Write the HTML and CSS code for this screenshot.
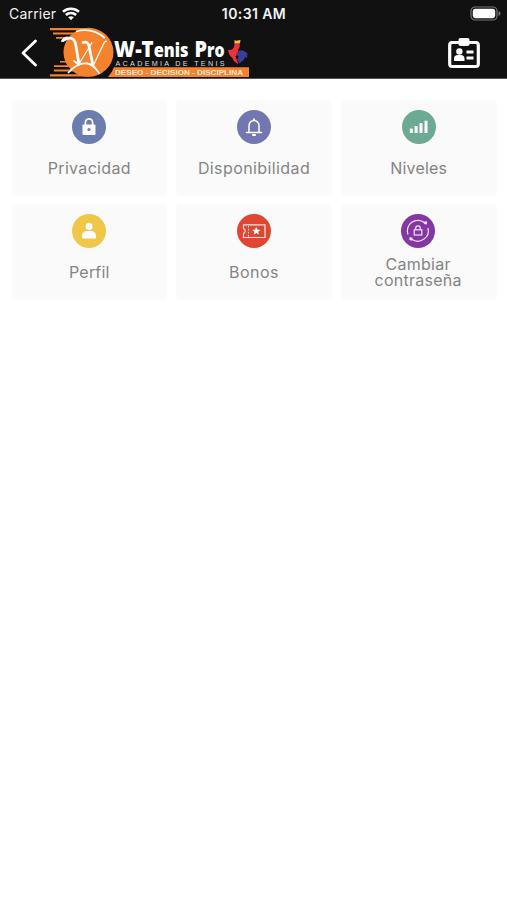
FILE: index.html
```html
<!DOCTYPE html>
<html lang="es">
<head>
<meta charset="utf-8">
<title>W-Tenis Pro</title>
<link rel="stylesheet" href="styles.css">
</head>
<body>
<header class="header">
  <div class="status">
    <div class="carrier"><span>Carrier</span>
      <svg class="wifi" width="18" height="14" viewBox="0 0 18 14" fill="none" stroke="#fff" stroke-width="2.6"><path d="M1 4.8C5.4.7 12.6.7 17 4.8M3.9 8c2.8-2.6 7.4-2.6 10.2 0"/><path d="M9 13.2 6.100 10.300C7.700 8.900 10.300 8.900 11.900 10.300Z" fill="#fff" stroke="none"/></svg>
    </div>
    <time class="clock">10:31 AM</time>
    <svg class="battery" width="31" height="16" viewBox="0 0 31 16"><rect x="1" y="1" width="26" height="13" rx="4" fill="none" stroke="#777" stroke-width="1.2"/><rect x="2.8" y="2.8" width="22.400" height="9.400" rx="2.400" fill="#fff"/><path d="M28.500 5v5q2-.7 2-2.500t-2-2.500Z" fill="#777"/></svg>
  </div>
  <nav class="nav">
    <svg class="back" width="18" height="28" viewBox="0 0 18 28" fill="none" stroke="#fff" stroke-width="2.800" stroke-linecap="round" stroke-linejoin="round"><path d="M15.500 2 3 14 15.500 26"/></svg>
    <svg class="logo" width="202" height="52" viewBox="49 26 202 52">
      <g fill="#f5822d">
        <path d="M50 28h40v2.300H50zM53 32.500h22v2H53zM56 37h12v1.800H56zM60 61h12v1.400H60zM54 65.300h16v1.800H54zM54 69.600h20v2H54zM50 74.200h40v2.400H50z"/>
        <ellipse cx="88.500" cy="52.300" rx="25" ry="24.500"/>
        <path d="M114 67.300h135v9.600H108q4-4 6-9.600Z"/>
      </g>
      <path d="M76 31.500Q92 27 105 38" stroke="#fff" stroke-width="1.800" fill="none"/>
      <path d="M61.500 42Q63 35.500 70 37.500" stroke="#fff" stroke-width="1" fill="none"/>
      <g fill="none" stroke="#fff" stroke-linecap="round" stroke-linejoin="round">
        <path d="M63 40.500q10-6 12.500 3L79 64" stroke-width="2.800"/>
        <path d="m79 64 13-21.500" stroke-width="1.200"/>
        <path d="M83 42.500q5-1.500 6 3.500L93 66" stroke-width="2.800"/>
        <path d="m93 66 11.500-24 2-.8" stroke-width="1.300"/>
        <path d="M68.500 72.500q9-10.500 19-9 6 1 11.500 9.500" stroke-width="1.800"/>
        <path d="m74 61 4 3" stroke-width="2"/>
      </g>
      <text class="brand" x="114" y="57" textLength="74.500" lengthAdjust="spacingAndGlyphs"><tspan font-size="23">W-T</tspan><tspan font-size="18.500">enis</tspan></text>
      <text class="brand" x="194.500" y="57" textLength="30" lengthAdjust="spacingAndGlyphs"><tspan font-size="23">P</tspan><tspan font-size="18.500">ro</tspan></text>
      <text class="academy" x="115.500" y="65.600" textLength="109">ACADEMIA DE TENIS</text>
      <text class="motto" x="115" y="74.600" textLength="128" lengthAdjust="spacingAndGlyphs">DESEO - DECISION - DISCIPLINA</text>
      <path d="m234.500 40 1.500.8 4.500-.7-.5 3.500-5.500.2Z" fill="#f4c430"/>
      <path d="M234.500 43.500 239.500 44q1 3-1.500 5.500 1 4-2.500 7l3 7.500q-5-2-6-6-4-3-4.500-8 4 .5 5.500-2 1-1.500 1-4.500Z" fill="#ee3338"/>
      <path d="M236 54q2-4 6-3.500 4 .5 6.500 4.500l-2-.7q1.500 2 .5 4l-2-1.500q-.5 3.500-4.500 5.700l-1.500 1q0-3-2-3.500l1.500-3.500Z" fill="#3c3d98"/>
    </svg>
    <svg class="badge" width="34" height="32" viewBox="0 0 34 32"><rect x="2.700" y="5.500" width="28.600" height="24" rx="2.500" fill="none" stroke="#fff" stroke-width="3.200"/><rect x="11.500" y="1" width="11" height="8" rx="2" fill="#fff"/><circle cx="12.400" cy="14.500" r="3.200" fill="#fff"/><path d="M7 24v-2.500q0-3.500 4-3.500h2.500q4 0 4 3.500V24ZM19.500 13.500h7v3h-7zm0 6h7v3h-7z" fill="#fff"/></svg>
  </nav>
</header>
<main class="grid">
  <a class="card"><svg class="icon" viewBox="0 0 34 34"><circle cx="17" cy="17" r="17" fill="#6b7caf"/><path d="M13.400 16v-3.500a3.600 3.600 0 0 1 7.200 0V16" fill="none" stroke="#fff" stroke-width="1.700"/><rect x="10.500" y="14.500" width="13" height="10.500" rx="1" fill="#fff"/><circle cx="17" cy="19.500" r="1.600" fill="#6b7caf"/></svg><span class="label privacy">Privacidad</span></a>
  <a class="card"><svg class="icon" viewBox="0 0 34 34"><circle cx="17" cy="17" r="17" fill="#7377b1"/><path d="M9.500 22.500h15M12 22v-6.500a5 5 0 0 1 10 0V22" fill="none" stroke="#fff" stroke-width="1.500" stroke-linecap="round"/><path d="M17 8.500v2M15.200 25h3.600" stroke="#fff" stroke-width="1.800"/></svg><span class="label availability">Disponibilidad</span></a>
  <a class="card"><svg class="icon" viewBox="0 0 34 34"><circle cx="17" cy="17" r="17" fill="#6caa93"/><path d="M7.800 18.500h3v4.500h-3zM12.600 16h3v7h-3zM17.500 13h3v10h-3zM22.500 10.700h3V23h-3z" fill="#fff"/></svg><span class="label levels">Niveles</span></a>
  <a class="card"><svg class="icon" viewBox="0 0 34 34"><circle cx="17" cy="17" r="17" fill="#efc84a"/><circle cx="17" cy="12.400" r="3.500" fill="#fff"/><path d="M10.200 24.500v-3q0-4.500 5-4.500h3.600q5 0 5 4.500v3Z" fill="#fff"/></svg><span class="label profile">Perfil</span></a>
  <a class="card"><svg class="icon" viewBox="0 0 34 34"><circle cx="17" cy="17" r="17" fill="#e04632"/><path d="M6.500 10.800h21.500v12.700H6.500v-3.700q3.500-2.700 0-5.400Z" fill="none" stroke="#ffe5df" stroke-width="1.200"/><path d="M11.500 12v10.500" stroke="#ffe5df" stroke-width="1" stroke-dasharray="1.500 1.500"/><path d="m19.300 13 1.200 2.600 2.900.3-2.200 1.900.7 2.800-2.600-1.500-2.600 1.500.7-2.800-2.200-1.900 2.900-.3Z" fill="#fff"/></svg><span class="label vouchers">Bonos</span></a>
  <a class="card"><svg class="icon shifted" viewBox="0 0 34 34"><circle cx="17" cy="17" r="17" fill="#8436a2"/><g fill="none" stroke="#f2e5f8" stroke-width="1.200"><path d="M7 20.500A10.500 10.500 0 0 1 23.500 8.700M27 14A10.500 10.500 0 0 1 10.500 25"/><rect x="13.200" y="15.800" width="7.600" height="5.200"/><path d="M14.700 15.800v-1.600a2.300 2.300 0 0 1 4.600 0v1.600"/></g><path d="m23.500 7.300 2.700.2-.4 3-2.800-.5ZM8.500 23l3 .7-.2 3-2.900-.8Z" fill="#f2e5f8"/></svg><span class="label password">Cambiar<br>contraseña</span></a>
</main>
</body>
</html>
```
FILE: styles.css
```css
* { box-sizing: border-box; }
body { margin: 0; background: #fff; font-family: Inter, "Liberation Sans", sans-serif; }
svg { display: block; flex: none; }
.header { height: 79px; background: #111; border-bottom: 1px solid #555; color: #f2f2f2; }
.status { height: 27px; padding: 0 6px 0 9px; display: grid; grid-template-columns: 1fr auto 1fr; align-items: center; font-size: 14px; }
.carrier { display: flex; align-items: center; gap: 6px; letter-spacing: .2px; }
.clock { font-size: 14px; font-weight: 600; letter-spacing: .4px; margin-right: 2px; }
.battery { justify-self: end; }
.nav { height: 51px; display: flex; align-items: center; padding: 0 26px 0 20px; }
.logo { margin-left: 11px; margin-bottom: 1px; }
.badge { margin-left: auto; }
.brand { font-family: "Open Sans", sans-serif; font-weight: 800; fill: #fff; }
.academy { font-family: "Liberation Sans", sans-serif; font-size: 7.2px; fill: #ddd; }
.motto { font-family: "Liberation Sans", sans-serif; font-size: 7px; font-weight: 700; fill: #ffe8d4; }
.grid { padding: 21px 10.5px 0 11.5px; display: grid; grid-template-columns: repeat(3, 1fr); grid-auto-rows: 96px; gap: 8px 9px; }
.card { background: #fafafa; border-radius: 5px; display: flex; flex-direction: column; align-items: center; padding-top: 10px; }
.icon { width: 34px; height: 34px; }
.shifted { margin-right: 1px; }
.label { flex: 1; display: flex; align-items: center; text-align: center; padding-bottom: 4px; font-size: 16px; line-height: 16px; color: #858585; }
.privacy { letter-spacing: .32px; }
.availability { letter-spacing: .4px; }
.levels { letter-spacing: .15px; }
.profile { letter-spacing: .2px; }
.vouchers { letter-spacing: .5px; }
.password { display: block; flex: none; padding: 8px 1px 0 0; letter-spacing: .25px; }
```
